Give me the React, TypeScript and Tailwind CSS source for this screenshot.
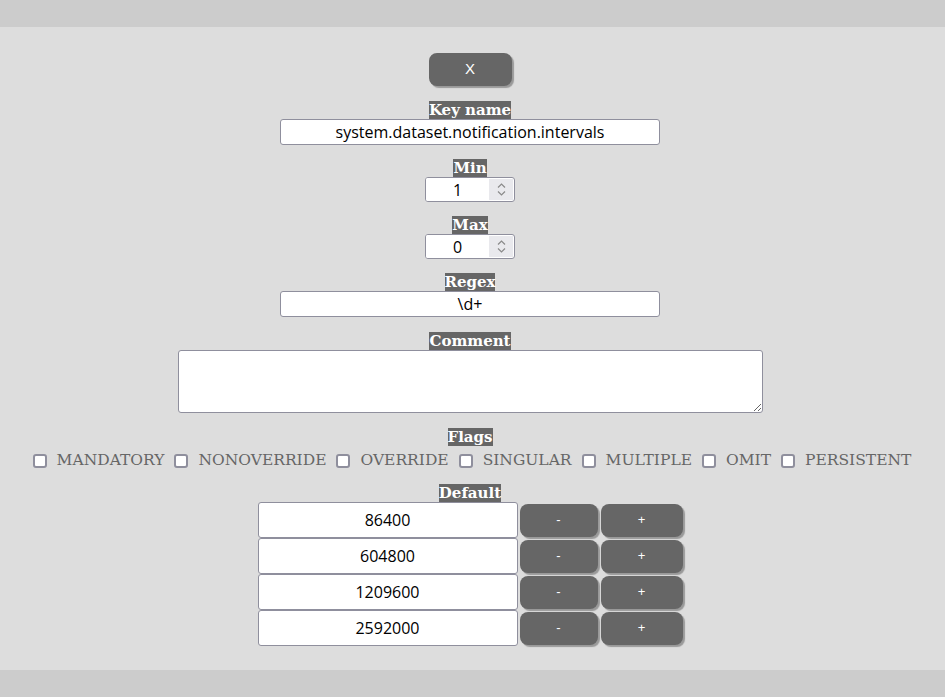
import React from "react";

const label =
  "inline-block bg-[#666666] text-white font-['DejaVu_Serif',serif] font-bold text-[15px] leading-[18px]";
const field =
  "h-[26px] rounded-[3px] border border-[#8f8f9d] bg-white text-center text-[16px] text-black font-['Open_Sans',sans-serif] outline-none";
const grayBtn =
  "rounded-[8px] bg-[#666666] text-white font-['Liberation_Sans',sans-serif] shadow-[2px_2px_1px_#999999]";

const flags = ["MANDATORY", "NONOVERRIDE", "OVERRIDE", "SINGULAR", "MULTIPLE", "OMIT", "PERSISTENT"];
const defaults = ["86400", "604800", "1209600", "2592000"];

const NumberField = ({ value }: { value: string }) => (
  <div className="flex h-[25px] w-[90px] overflow-hidden rounded-[3px] border border-[#8f8f9d] bg-white">
    <input
      readOnly
      value={value}
      className="w-[63px] bg-white text-center text-[16px] text-black font-['Open_Sans',sans-serif] outline-none"
    />
    <div className="my-px mr-px flex w-[24px] flex-col items-center justify-center gap-[3px] bg-[#e9e9ed]">
      <svg width="9" height="5" viewBox="0 0 9 5" fill="none" stroke="#8a8a8a" strokeWidth="1.2">
        <path d="M1 4.5 4.5 1 8 4.5" />
      </svg>
      <svg width="9" height="5" viewBox="0 0 9 5" fill="none" stroke="#8a8a8a" strokeWidth="1.2">
        <path d="M1 0.5 4.5 4 8 0.5" />
      </svg>
    </div>
  </div>
);

export default function App() {
  return (
    <div className="flex min-h-[697px] flex-col bg-[#cccccc]">
      <div className="h-[27px]" />
      <main className="flex flex-col items-center bg-[#dddddd] pb-[24px] pr-[5px] pt-[26px]">
        <button className={`${grayBtn} h-[33px] w-[83px] text-[15px]`}>X</button>

        <span className={`${label} mt-[15px]`}>Key name</span>
        <input readOnly value="system.dataset.notification.intervals" className={`${field} w-[380px]`} />

        <span className={`${label} mt-[14px]`}>Min</span>
        <NumberField value="1" />

        <span className={`${label} mt-[14px]`}>Max</span>
        <NumberField value="0" />

        <span className={`${label} mt-[14px]`}>Regex</span>
        <input readOnly value="\d+" className={`${field} w-[380px]`} />

        <span className={`${label} mt-[15px]`}>Comment</span>
        <textarea className="h-[63px] w-[585px] rounded-[3px] border border-[#8f8f9d] bg-white outline-none" />

        <span className={`${label} mt-[15px]`}>Flags</span>
        <div className="flex h-[30px] items-center gap-[10px] pb-[1px] pl-[4px] font-['DejaVu_Serif',serif] text-[15.5px] text-[#666666]">
          {flags.map((f) => (
            <label key={f} className="flex items-center gap-[10px]">
              <span className="h-[14px] w-[14px] rounded-[3px] border-2 border-[#8f8f9d] bg-white" />
              {f}
            </label>
          ))}
        </div>

        <span className={`${label} mt-[8px]`}>Default</span>
        <div className="flex flex-col">
          {defaults.map((d) => (
            <div key={d} className="flex h-[36px] items-center">
              <input
                readOnly
                value={d}
                className="h-[36px] w-[260px] rounded-[3px] border border-[#8f8f9d] bg-white text-center text-[16px] text-black font-['Open_Sans',sans-serif] outline-none"
              />
              <button className={`${grayBtn} ml-[2px] h-[33px] w-[78px] text-[13px]`}>-</button>
              <button className={`${grayBtn} ml-[3px] h-[33px] w-[82px] text-[13px]`}>+</button>
            </div>
          ))}
        </div>
      </main>
      <div className="flex-1" />
    </div>
  );
}
